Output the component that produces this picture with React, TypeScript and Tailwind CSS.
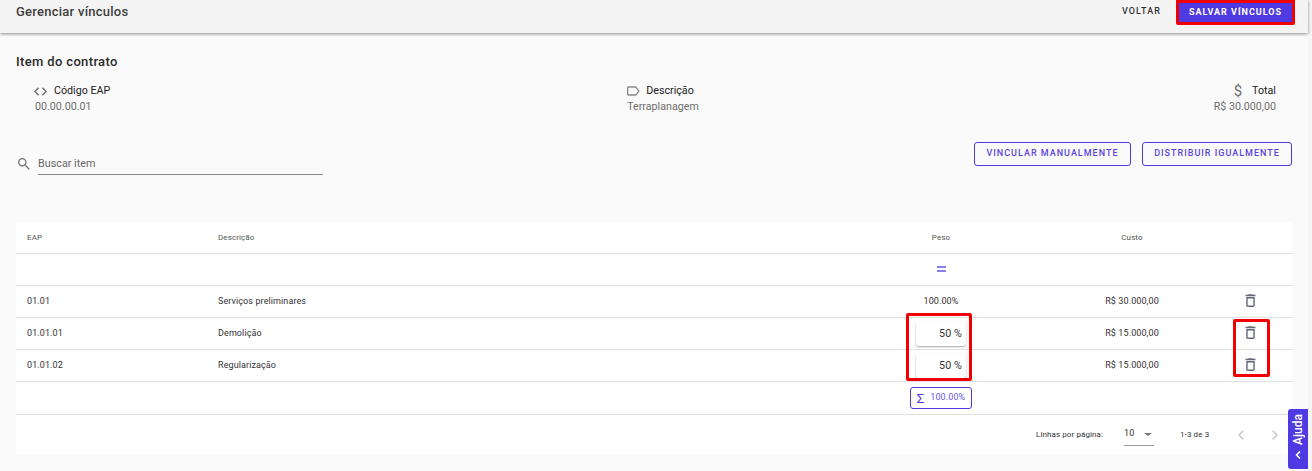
import { FC, ReactNode } from 'react';
import { ChevronLeft, ChevronRight, ChevronUp } from 'lucide-react';

const rowGrid = 'grid grid-cols-[202px_1fr_222px_160px_80px] items-center';

const TrashIcon: FC = () => (
  <svg width="17" height="17" viewBox="0 0 24 24" fill="#626977" className="-mt-0.5">
    <path d="M6 19c0 1.1.9 2 2 2h8c1.1 0 2-.9 2-2V7H6v12zM8 9h8v10H8V9zm7.5-5l-1-1h-5l-1 1H5v2h14V4z" />
  </svg>
);

const InfoBlock: FC<{ icon: ReactNode; label: string; value: string; right?: boolean }> = ({
  icon,
  label,
  value,
  right,
}) => (
  <div className={`flex flex-col ${right ? 'items-end' : 'items-start'}`}>
    <div className="flex h-4 items-center text-[10.7px] leading-4 text-[#212121]">
      {icon}
      <span>{label}</span>
    </div>
    <div className={`text-[10.7px] leading-4 text-[#6f6f6f] ${right ? '' : 'pl-0.5'}`}>{value}</div>
  </div>
);

const rows = [
  { eap: '01.01', desc: 'Serviços preliminares', peso: '100.00%', custo: 'R$ 30.000,00', input: false },
  { eap: '01.01.01', desc: 'Demolição', peso: '50 %', custo: 'R$ 15.000,00', input: true },
  { eap: '01.01.02', desc: 'Regularização', peso: '50 %', custo: 'R$ 15.000,00', input: true },
];

export default function App() {
  return (
    <div className="relative h-[471px] w-[1312px] overflow-hidden bg-[#f5f5f5] font-['Roboto',sans-serif]">
      <div className="h-[471px] w-[1308px] bg-[#fafafa]">
        <header className="flex h-[33px] items-start justify-between bg-[#f4f4f4] pl-4 pr-[13px] shadow-[0_1px_3px_rgba(0,0,0,0.45)]">
          <h1 className="text-[13px] font-medium leading-[23px] tracking-[0.25px] text-[#3d3d3d]">Gerenciar vínculos</h1>
          <div className="flex items-start gap-[15px]">
            <button className="h-[24px] text-[9px] font-medium tracking-[1.1px] text-[#333]">VOLTAR</button>
            <button className="h-[25px] w-[119px] rounded-b-[2px] border-[3px] border-[#f00000] bg-[#4f39e3] text-[9px] font-bold tracking-[1px] text-white">
              SALVAR VÍNCULOS
            </button>
          </div>
        </header>

        <section className="px-4 pt-[21px]">
          <h2 className="text-[13px] font-medium leading-4 tracking-[0.35px] text-[#2b2b2b]">Item do contrato</h2>
          <div className="mt-[13px] flex justify-between pl-[17px] pr-4">
            <InfoBlock
              icon={
                <svg width="15" height="15" viewBox="0 0 24 24" fill="none" stroke="#666" strokeWidth="2" className="mr-[6px]">
                  <path d="M9 6l-6 6 6 6M15 6l6 6-6 6" />
                </svg>
              }
              label="Código EAP"
              value="00.00.00.01"
            />
            <InfoBlock
              icon={
                <svg width="16" height="16" viewBox="0 0 24 24" fill="#8a8a8a" className="mr-[5px]">
                  <path d="M17.63 5.84C17.27 5.33 16.67 5 16 5L5 5.01C3.9 5.01 3 5.9 3 7v10c0 1.1.9 1.99 2 1.99L16 19c.67 0 1.27-.33 1.63-.84L22 12l-4.37-6.16zM16 17H5V7h11l3.55 5L16 17z" />
                </svg>
              }
              label="Descrição"
              value="Terraplanagem"
            />
            <InfoBlock
              right
              icon={<span className="mr-2.5 text-[15px] text-[#6f6f6f]">$</span>}
              label="Total"
              value="R$ 30.000,00"
            />
          </div>

          <div className="mt-[27px] flex items-start justify-between">
            <div className="mt-2.5 flex items-center">
              <svg width="16" height="16" viewBox="0 0 24 24" fill="#777" className="mr-1.5">
                <path d="M15.5 14h-.79l-.28-.27C15.41 12.59 16 11.11 16 9.5 16 5.91 13.09 3 9.5 3S3 5.91 3 9.5 5.91 16 9.5 16c1.61 0 3.09-.59 4.23-1.57l.27.28v.79l5 4.99L20.49 19l-4.99-5zm-6 0C7.01 14 5 11.99 5 9.5S7.01 5 9.5 5 14 7.01 14 9.5 11.99 14 9.5 14z" />
              </svg>
              <div className="h-[23px] w-[285px] border-b border-[#8c8c8c] text-[10.8px] leading-[24px] text-[#666]">
                Buscar item
              </div>
            </div>
            <div className="flex gap-[11px]">
              <button className="h-6 w-[157px] rounded-[3px] border border-[#4f39e3] text-[9px] font-medium tracking-[1px] text-[#5a45e0]">
                VINCULAR MANUALMENTE
              </button>
              <button className="h-6 w-[150px] rounded-[3px] border border-[#4f39e3] text-[9px] font-medium tracking-[1px] text-[#5a45e0]">
                DISTRIBUIR IGUALMENTE
              </button>
            </div>
          </div>

          <div className="mt-[47px] rounded-t-[3px] bg-white text-[9px] tracking-[0.1px] text-[#333]">
            <div className={`${rowGrid} h-8 border-b border-[#e0e0e0] text-[8px] text-[#555]`}>
              <div className="pl-[11px]">EAP</div>
              <div>Descrição</div>
              <div className="text-center">Peso</div>
              <div className="text-center">Custo</div>
              <div />
            </div>
            <div className={`${rowGrid} h-8 border-b border-[#e0e0e0]`}>
              <div />
              <div />
              <div className="flex justify-center">
                <span className="-mt-0.5 flex flex-col gap-[2px]">
                  <span className="block h-[2px] w-[9px] bg-[#8b7fe8]" />
                  <span className="block h-[2px] w-[9px] bg-[#8b7fe8]" />
                </span>
              </div>
            </div>
            {rows.map((row) => (
              <div key={row.eap} className={`${rowGrid} h-8 border-b border-[#e0e0e0]`}>
                <div className="pl-[11px]">{row.eap}</div>
                <div>{row.desc}</div>
                <div className="flex justify-center">
                  {row.input ? (
                    <div className="h-[25px] w-[50px] rounded-[3px] bg-white pr-1 text-right text-[10.7px] leading-[25px] text-[#333] shadow-[0_1px_2px_rgba(0,0,0,0.35)]">
                      {row.peso}
                    </div>
                  ) : (
                    row.peso
                  )}
                </div>
                <div className="text-center">{row.custo}</div>
                <div className="flex justify-center pr-1">
                  <TrashIcon />
                </div>
              </div>
            ))}
            <div className={`${rowGrid} h-[33px] border-b border-[#e0e0e0]`}>
              <div />
              <div />
              <div className="flex justify-center">
                <div className="flex h-[22px] w-[62px] items-center justify-center gap-[6px] rounded-[3px] border border-[#4f39e3] text-[#6a58e6]">
                  <span className="text-[13px] leading-none text-[#4f39e3]">Σ</span>
                  <span>100.00%</span>
                </div>
              </div>
            </div>
            <div className="flex h-[39px] items-center text-[8px] text-[#333]">
              <span className="ml-[1020px] w-[88px]">Linhas por página:</span>
              <div className="flex h-[22px] w-[30px] items-center justify-between border-b border-[#999] text-[9px]">
                <span>10</span>
                <span className="mr-0.5 h-0 w-0 border-x-[4px] border-t-[3px] border-x-transparent border-t-[#777]" />
              </div>
              <span className="ml-[26px] w-[28px] whitespace-nowrap">1-3 de 3</span>
              <ChevronLeft size={16} className="ml-[25px] text-[#c4c4c4]" />
              <ChevronRight size={16} className="ml-[18px] text-[#c4c4c4]" />
            </div>
          </div>
        </section>
      </div>

      {/* marcações vermelhas e aba de ajuda ficam sobre a tabela */}
      <div className="absolute left-[906px] top-[313px] h-[68px] w-[66px] rounded-[2px] border-[3px] border-[#f00000]" />
      <div className="absolute left-[1233px] top-[319px] h-[58px] w-[37px] rounded-[2px] border-[3px] border-[#f00000]" />
      <div className="absolute left-[1288px] top-[409px] flex h-[60px] w-[20px] flex-col items-center justify-end rounded-l-[3px] bg-[#4f39e3] pb-2 text-white">
        <span className="mb-1 text-[12px] font-medium leading-none [writing-mode:vertical-rl] rotate-180">Ajuda</span>
        <ChevronUp size={12} strokeWidth={3.5} className="-rotate-90" />
      </div>
    </div>
  );
}
